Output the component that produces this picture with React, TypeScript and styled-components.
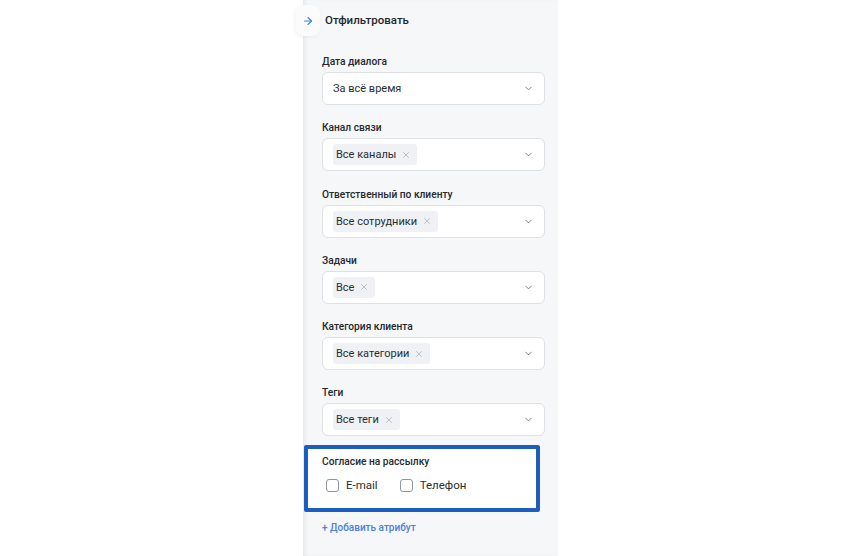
import React from 'react'
import styled, { createGlobalStyle } from 'styled-components'
import { ArrowRight, ChevronDown, X } from 'lucide-react'

const GlobalStyle = createGlobalStyle`
  html, body {
    margin: 0;
    padding: 0;
    background: #ffffff;
  }
  body {
    font-family: Roboto, "Noto Sans", "Liberation Sans", sans-serif;
    color: #1f2328;
  }
`

const Page = styled.div`
  display: flex;
  min-height: 556px;
  padding-left: 303px;
`

const Panel = styled.aside`
  width: 255px;
  min-height: 556px;
  background: #f6f7f9;
  box-shadow: inset 4px 0 4px -2px rgba(0, 0, 0, 0.07);
`

const Header = styled.div`
  display: flex;
  align-items: center;
  height: 40px;
  gap: 5px;
`

const ToggleTab = styled.div`
  display: flex;
  align-items: center;
  justify-content: center;
  width: 24px;
  height: 31px;
  margin-left: -7px;
  margin-top: 1px;
  border-radius: 8px;
  background: #fbfbfc;
  box-shadow: -1px 1px 4px rgba(0, 0, 0, 0.06);
  color: #3b7ff2;
`

const Title = styled.span`
  font-size: 11.5px;
  font-weight: 500;
  color: #23262b;
`

const Body = styled.div`
  display: flex;
  flex-direction: column;
  gap: 16.3px;
  padding: 15px 13px 0 19px;
`

const Field = styled.div`
  display: flex;
  flex-direction: column;
  gap: 3px;
`

const Label = styled.span`
  font-size: 10.2px;
  font-weight: 500;
  line-height: 14px;
  color: #25282d;
`

const Select = styled.div`
  display: flex;
  align-items: center;
  height: 33px;
  box-sizing: border-box;
  padding: 0 10px 0 10px;
  background: #ffffff;
  border: 1px solid #dde0e5;
  border-radius: 6px;
`

const Value = styled.span`
  flex: 1;
  font-size: 11px;
  color: #2a2d32;
`

const Chips = styled.div`
  flex: 1;
  display: flex;
`

const Chip = styled.span`
  display: inline-flex;
  align-items: center;
  gap: 5px;
  height: 21px;
  padding: 0 6px 0 3px;
  border-radius: 3px;
  background: #eff1f4;
  font-size: 11px;
  color: #2a2d32;
`

const ChipRemove = styled(X)`
  color: #a2a7ae;
`

const Chevron = styled(ChevronDown)`
  color: #70757c;
`

const ConsentBox = styled.section`
  display: flex;
  flex-direction: column;
  gap: 9px;
  margin: -7.3px 5px 0 -18px;
  padding: 6px 10px 16px 14px;
  background: #ffffff;
  border: 4px solid #1b5ec0;
  border-radius: 2px;
`

const CheckRow = styled.div`
  display: flex;
  align-items: center;
  gap: 22px;
  padding-left: 4px;
`

const CheckItem = styled.label`
  display: inline-flex;
  align-items: center;
  gap: 7px;
  font-size: 11.5px;
  color: #2a2d32;
`

const Box = styled.span`
  width: 13px;
  height: 13px;
  box-sizing: border-box;
  border: 1px solid #8f959d;
  border-radius: 3px;
  background: #ffffff;
`

const AddLink = styled.a`
  margin-top: -7px;
  font-size: 10px;
  font-weight: 500;
  color: #4a80de;
  text-decoration: none;
`

type Filter = { label: string; value?: string; chip?: string }

const filters: Filter[] = [
  { label: 'Дата диалога', value: 'За всё время' },
  { label: 'Канал связи', chip: 'Все каналы' },
  { label: 'Ответственный по клиенту', chip: 'Все сотрудники' },
  { label: 'Задачи', chip: 'Все' },
  { label: 'Категория клиента', chip: 'Все категории' },
  { label: 'Теги', chip: 'Все теги' },
]

export default function App() {
  return (
    <>
      <GlobalStyle />
      <Page>
        <Panel>
          <Header>
            <ToggleTab>
              <ArrowRight size={12} strokeWidth={2.2} />
            </ToggleTab>
            <Title>Отфильтровать</Title>
          </Header>
          <Body>
            {filters.map((f) => (
              <Field key={f.label}>
                <Label>{f.label}</Label>
                <Select>
                  {f.chip ? (
                    <Chips>
                      <Chip>
                        {f.chip}
                        <ChipRemove size={10} strokeWidth={1.6} />
                      </Chip>
                    </Chips>
                  ) : (
                    <Value>{f.value}</Value>
                  )}
                  <Chevron size={11} strokeWidth={2} />
                </Select>
              </Field>
            ))}
            <ConsentBox>
              <Label>Согласие на рассылку</Label>
              <CheckRow>
                <CheckItem>
                  <Box />
                  E-mail
                </CheckItem>
                <CheckItem>
                  <Box />
                  Телефон
                </CheckItem>
              </CheckRow>
            </ConsentBox>
            <AddLink href="#">+ Добавить атрибут</AddLink>
          </Body>
        </Panel>
      </Page>
    </>
  )
}
